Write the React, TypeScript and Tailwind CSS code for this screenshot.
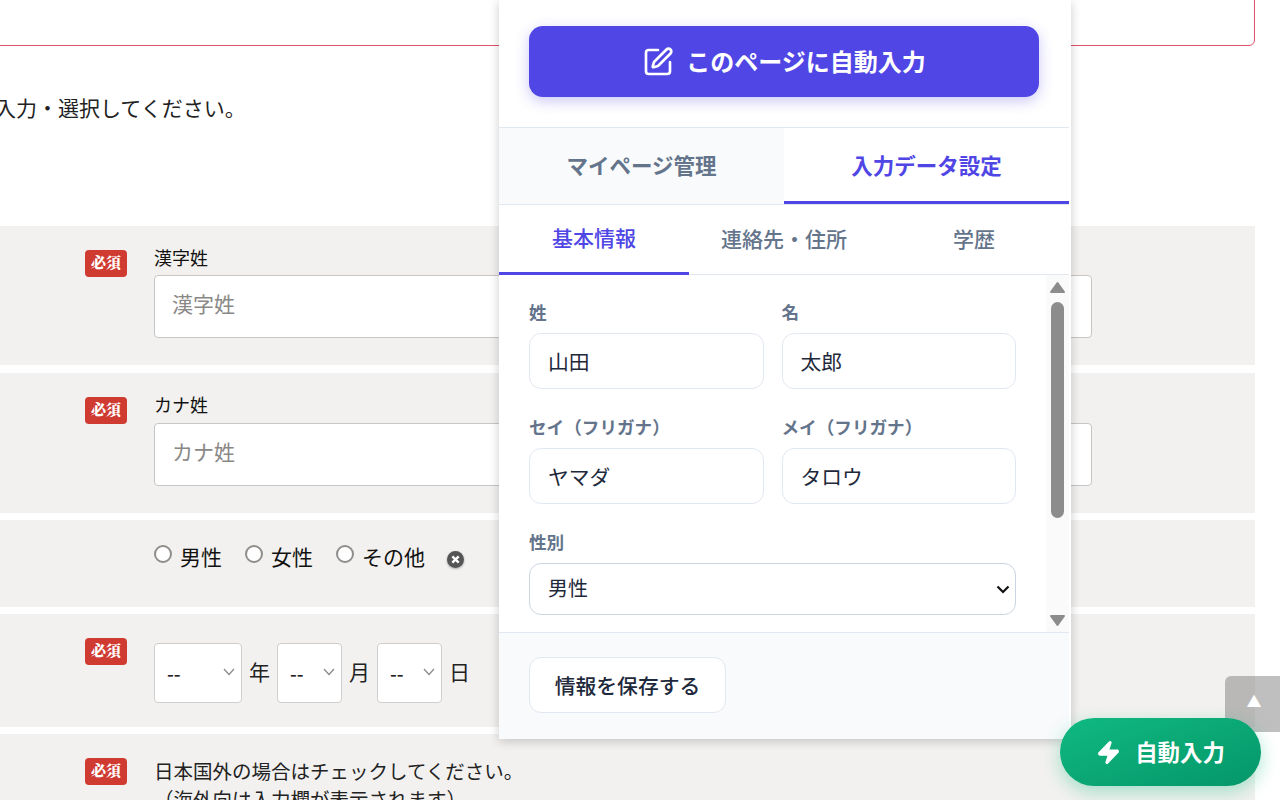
import { SquarePen, Zap } from "lucide-react";

const Badge = () => (
  <span className="flex h-[27px] w-[42px] shrink-0 items-center justify-center rounded-[4px] bg-[#cf3a31] pb-[3px] font-['Noto_Serif_CJK_JP','Noto_Sans_CJK_JP',sans-serif] text-[15px] font-black text-white">
    必須
  </span>
);

const NameRow = ({ label, other, rowClass, labelClass }: { label: string; other: string; rowClass: string; labelClass: string }) => (
  <div className={`flex bg-[#f2f1ef] pl-[85px] ${rowClass}`}>
    <div className="pt-[24px]">
      <Badge />
    </div>
    <div className="ml-[27px] grid w-[938px] grid-cols-2 gap-[20px] pt-[19px]">
      {[label, other].map((name) => (
        <div key={name}>
          <div className={`text-[18px] leading-[24px] text-[#111] ${labelClass}`}>{name}</div>
          <input
            placeholder={name}
            className="h-[63px] w-full rounded-[4px] border border-[#c8c6c4] bg-white px-[17px] pb-[7px] text-[21px] outline-none placeholder:text-[#8a8886]"
          />
        </div>
      ))}
    </div>
  </div>
);

const Radio = ({ label }: { label: string }) => (
  <label className="flex items-start">
    <input type="radio" name="gender" className="mt-[25px] h-[18px] w-[18px] appearance-none rounded-full border-2 border-[#8f8e8c] bg-white" />
    <span className="ml-[8px] mt-[20px] text-[21px] leading-[32px] text-[#111]">{label}</span>
  </label>
);

const DateSelect = ({ width }: { width: string }) => (
  <div className={`relative ${width}`}>
    <select className="h-[60px] w-full appearance-none rounded-[4px] border border-[#d0cecc] bg-white pl-[12px] text-[19px] font-medium text-[#222] outline-none">
      <option>--</option>
    </select>
    <svg viewBox="0 0 12 8" className="absolute right-[7px] top-[25px] h-[8px] w-[12px] text-[#8a8886]" fill="none" stroke="currentColor" strokeWidth="1.2">
      <path d="M1 1l5 5.5L11 1" />
    </svg>
  </div>
);

const Field = ({ label, value }: { label: string; value: string }) => (
  <div>
    <div className="mb-[8px] text-[17.6px] font-bold leading-[25px] text-[#64748b]">{label}</div>
    <input
      readOnly
      defaultValue={value}
      className="h-[56px] w-full rounded-[12px] border border-[#e2e8f0] bg-white px-[18px] text-[20.8px] text-[#1e293b] outline-none"
    />
  </div>
);

export default function App() {
  return (
    <div className="relative h-[800px] w-[1280px] overflow-hidden bg-white font-['Noto_Sans_CJK_JP',sans-serif]">
      {/* page behind the panel */}
      <div className="w-[1255px]">
        <div className="ml-[-10px] mt-[-20px] h-[66px] rounded-[6px] border border-[#e2506c]" />
        <p className="ml-[-5px] mt-[46px] h-[134px] text-[21px] leading-[30px] text-[#222]">入力・選択してください。</p>

        <NameRow label="漢字姓" other="漢字名" rowClass="h-[139px]" labelClass="mb-[6px]" />
        <div className="h-[8px]" />
        <NameRow label="カナ姓" other="カナ名" rowClass="h-[140px]" labelClass="mb-[7px]" />

        <div className="mt-[7px] flex h-[87px] bg-[#f2f1ef] pl-[154px]">
          <div className="flex gap-[23px]">
            <Radio label="男性" />
            <Radio label="女性" />
            <Radio label="その他" />
          </div>
          <svg viewBox="0 0 16 16" className="ml-[22px] mt-[31px] h-[17px] w-[17px] drop-shadow-[0_1px_1px_rgba(0,0,0,0.3)]">
            <circle cx="8" cy="8" r="8" fill="#555" />
            <path d="M5 5l6 6M11 5l-6 6" stroke="#fff" strokeWidth="2.2" />
          </svg>
        </div>

        <div className="mt-[7px] flex h-[113px] bg-[#f2f1ef] pl-[85px]">
          <div className="pt-[24px]">
            <Badge />
          </div>
          <div className="ml-[27px] flex items-start pt-[29px] text-[21px] leading-[56px] text-[#222]">
            <DateSelect width="w-[88px]" />
            <span className="ml-[7px] w-[28px]">年</span>
            <DateSelect width="w-[65px]" />
            <span className="ml-[7px] w-[28px]">月</span>
            <DateSelect width="w-[65px]" />
            <span className="ml-[7px]">日</span>
          </div>
        </div>

        <div className="mt-[7px] flex h-[100px] bg-[#f2f1ef] pl-[85px]">
          <div className="pt-[24px]">
            <Badge />
          </div>
          <div className="ml-[27px] pt-[23px] text-[19.5px] leading-[28px] text-[#222]">
            <div>日本国外の場合はチェックしてください。</div>
            <div>（海外向は入力欄が表示されます）</div>
          </div>
        </div>
      </div>

      {/* back to top */}
      <button className="absolute left-[1225px] top-[676px] flex h-[56px] w-[55px] items-center justify-center rounded-l-[6px] bg-[#80808080] pb-[5px] pl-[3px] text-[15px] text-white">
        ▲
      </button>

      {/* extension panel */}
      <div className="absolute left-[499px] top-0 flex h-[739px] w-[572px] flex-col border-r-2 border-white bg-white font-['Inter','Noto_Sans_CJK_JP',sans-serif] shadow-[0_2px_10px_rgba(0,0,0,0.2)]">
        <div className="h-[128px] shrink-0 border-b border-[#e2e8f0] px-[30px] pt-[26px]">
          <button className="flex h-[71px] w-[510px] items-center justify-center gap-[12px] rounded-[14px] bg-[#4f46e5] text-[24px] font-bold text-white shadow-[0_4px_14px_rgba(79,70,229,0.3)]">
            <SquarePen className="h-[32px] w-[32px]" strokeWidth={2} />
            <span className="pt-[3px]">このページに自動入力</span>
          </button>
        </div>

        <div className="flex h-[77px] shrink-0 border-b border-[#e2e8f0] text-[21.5px] font-semibold">
          <div className="flex w-[285px] items-center justify-center bg-[#f8fafc] text-[#64748b]">マイページ管理</div>
          <div className="flex w-[285px] items-center justify-center border-b-[3px] border-[#4f46e5] pt-[3px] text-[#4f46e5]">入力データ設定</div>
        </div>

        <div className="flex h-[70px] shrink-0 border-b border-[#e2e8f0] text-[21px] font-medium text-[#64748b]">
          <div className="mb-[-1px] flex w-[190px] items-center justify-center border-b-[3px] border-[#4f46e5] text-[#4f46e5]">基本情報</div>
          <div className="flex w-[190px] items-center justify-center">連絡先・住所</div>
          <div className="flex w-[190px] items-center justify-center">学歴</div>
        </div>

        <div className="flex min-h-0 flex-1">
          <div className="w-[547px] overflow-hidden px-[30px] pt-[25px]">
            <div className="grid grid-cols-2 gap-x-[18px] gap-y-[26px]">
              <Field label="姓" value="山田" />
              <Field label="名" value="太郎" />
              <Field label="セイ（フリガナ）" value="ヤマダ" />
              <Field label="メイ（フリガナ）" value="タロウ" />
            </div>
            <div className="mb-[8px] mt-[26px] text-[17.6px] font-bold leading-[25px] text-[#64748b]">性別</div>
            <div className="relative">
              <select className="h-[52px] w-full appearance-none rounded-[12px] border border-[#cbd5e1] bg-white px-[18px] text-[20px] text-[#1e293b] outline-none">
                <option>男性</option>
              </select>
              <svg viewBox="0 0 14 9" className="absolute right-[6px] top-[22px] h-[9px] w-[14px] text-[#111]" fill="none" stroke="currentColor" strokeWidth="2.2">
                <path d="M1.5 1.5L7 7l5.5-5.5" />
              </svg>
            </div>
          </div>
          {/* scrollbar */}
          <div className="flex w-[23px] flex-col items-center bg-[#fafafa] pt-[6px]">
            <svg viewBox="0 0 15 12" className="h-[12px] w-[15px] shrink-0 text-[#8c8c8c]" fill="currentColor" stroke="currentColor" strokeWidth="2" strokeLinejoin="round">
              <path d="M7.5 2L14 11H1z" />
            </svg>
            <div className="mt-[9px] h-[216px] w-[13px] shrink-0 rounded-full bg-[#8c8c8c]" />
            <svg viewBox="0 0 15 12" className="mt-[97px] h-[12px] w-[15px] shrink-0 text-[#8c8c8c]" fill="currentColor" stroke="currentColor" strokeWidth="2" strokeLinejoin="round">
              <path d="M1 1h13l-6.5 9z" />
            </svg>
          </div>
        </div>

        <div className="h-[107px] shrink-0 border-t border-[#e2e8f0] bg-[#f8fafc] px-[30px] pt-[24px]">
          <button className="h-[56px] w-[197px] rounded-[12px] border border-[#e2e8f0] bg-white pt-[3px] text-[20.8px] font-medium text-[#1e293b]">
            情報を保存する
          </button>
        </div>
      </div>

      {/* floating button */}
      <button className="absolute left-[1060px] top-[718px] flex h-[68px] w-[201px] items-center justify-center gap-[14px] rounded-full bg-gradient-to-br from-[#10b981] to-[#059669] text-[22.4px] font-bold text-white shadow-[0_6px_18px_rgba(16,185,129,0.35)]">
        <Zap className="h-[25px] w-[25px]" fill="currentColor" />
        自動入力
      </button>
    </div>
  );
}
